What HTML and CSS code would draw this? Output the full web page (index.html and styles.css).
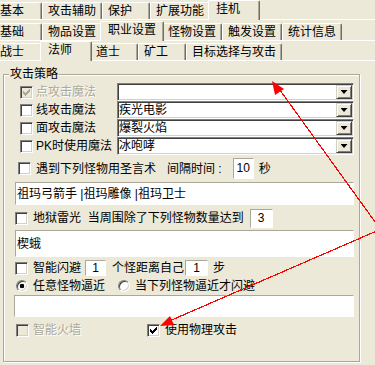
FILE: index.html
```html
<!DOCTYPE html>
<html lang="zh-CN">

<head>
    <meta charset="UTF-8">
    <meta name="viewport" content="width=device-width, initial-scale=1.0">
    <title>挂机 - 职业设置</title>
    <link rel="stylesheet" href="styles.css">
</head>

<body>
    <!-- 三层选项卡 -->
    <div class="tabrow first">
        <span class="tab start">基本</span>
        <span class="tab">攻击辅助</span>
        <span class="tab">保护</span>
        <span class="tab">扩展功能</span>
        <span class="tab on">挂机</span>
    </div>
    <div class="tabrow second">
        <span class="tab start">基础</span>
        <span class="tab">物品设置</span>
        <span class="tab on">职业设置</span>
        <span class="tab">怪物设置</span>
        <span class="tab">触发设置</span>
        <span class="tab">统计信息</span>
    </div>
    <div class="tabrow">
        <span class="tab start">战士</span>
        <span class="tab on">法师</span>
        <span class="tab">道士</span>
        <span class="tab">矿工</span>
        <span class="tab">目标选择与攻击</span>
    </div>

    <fieldset class="group">
        <legend>攻击策略</legend>

        <div class="row magic top">
            <span class="chk dis"><svg width="7" height="7"><path d="M0 2H1V3H2V4H3V3H4V2H5V1H6V0H7V3H6V4H5V5H4V6H3V7H2V6H1V5H0Z"/></svg></span>
            <span class="lbl gray">点攻击魔法</span>
            <div class="combo"><span class="val"></span><span class="drop"></span></div>
        </div>
        <div class="row magic">
            <span class="chk"></span>
            <span class="lbl">线攻击魔法</span>
            <div class="combo"><span class="val">疾光电影</span><span class="drop"></span></div>
        </div>
        <div class="row magic">
            <span class="chk"></span>
            <span class="lbl">面攻击魔法</span>
            <div class="combo"><span class="val">爆裂火焰</span><span class="drop"></span></div>
        </div>
        <div class="row magic">
            <span class="chk"></span>
            <span class="lbl">PK时使用魔法</span>
            <div class="combo"><span class="val">冰咆哮</span><span class="drop"></span></div>
        </div>

        <div class="row pray">
            <span class="chk"></span>
            <span class="txt">遇到下列怪物用圣言术</span>
            <span class="txt interval">间隔时间 :</span>
            <span class="edit sec">10</span>
            <span class="txt unit">秒</span>
        </div>
        <div class="field list">祖玛弓箭手 |祖玛雕像 |祖玛卫士</div>

        <div class="row thunder">
            <span class="chk"></span>
            <span class="txt">地狱雷光&nbsp;&nbsp;当周围除了下列怪物数量达到</span>
            <span class="edit num">3</span>
        </div>
        <div class="field tall">楔蛾</div>

        <div class="row dodge">
            <span class="chk"></span>
            <span class="txt">智能闪避</span>
            <span class="edit small first">1</span>
            <span class="txt near">个怪距离自己</span>
            <span class="edit small second">1</span>
            <span class="txt unit">步</span>
        </div>
        <div class="row radios">
            <span class="radio on"></span>
            <span class="txt">任意怪物逼近</span>
            <span class="radio second"></span>
            <span class="txt">当下列怪物逼近才闪避</span>
        </div>
        <div class="field low"></div>

        <div class="row last">
            <span class="chk dis blank"></span>
            <span class="txt gray">智能火墙</span>
            <span class="chk phys"><svg width="7" height="7"><path d="M0 2H1V3H2V4H3V3H4V2H5V1H6V0H7V3H6V4H5V5H4V6H3V7H2V6H1V5H0Z"/></svg></span>
            <span class="txt">使用物理攻击</span>
        </div>
    </fieldset>

    <!-- 红色标注箭头 -->
    <svg class="marks" width="375" height="365" viewBox="0 0 375 365">
        <line x1="375.5" y1="222.5" x2="279.5" y2="89.5" stroke="#f00" stroke-width="1.2" shape-rendering="crispEdges" />
        <polygon points="272,81 275,95 284,89" fill="#f00" />
        <line x1="375.5" y1="231.5" x2="170.5" y2="320.5" stroke="#f00" stroke-width="1.2" shape-rendering="crispEdges" />
        <polygon points="160,326 170,316 174,325" fill="#f00" />
    </svg>
</body>

</html>
```

FILE: styles.css
```css
* {
    margin: 0px;
    padding: 0px;
}

html,
body {
    width: 375px;
    height: 365px;
    overflow: hidden;
}

body {
    position: relative;
    background: #ece9d8;
    font: 12px/16px "Liberation Sans", "Noto Sans CJK SC", sans-serif;
    color: #000;
}

/* 选项卡 */
.tabrow {
    display: flex;
    height: 20px;
    white-space: nowrap;
    /* 页面上沿的白线 */
    background: linear-gradient(#fff, #fff) left bottom / 100% 1px no-repeat;
}

.tabrow.first {
    margin-bottom: 1px;
}

.tab {
    box-sizing: border-box;
    min-width: 48px;
    height: 17px;
    margin-top: 2px;
    padding: 0 5px;
    border: 1px solid #fff;
    border-bottom: 0;
    border-right-color: #716f64;
    border-radius: 2px 2px 0 0;
    box-shadow: inset -1px 0 #aca899;
    line-height: 16px;
}

.tab.start {
    margin-left: -6px;
}

.tab.on {
    position: relative;
    z-index: 1;
    min-width: 52px;
    height: 20px;
    margin: 0 -2px;
    padding: 0 7px;
    background: #ece9d8;
}

/* 分组框 */
.group {
    box-sizing: border-box;
    width: 357px;
    min-width: 0;
    height: 295px;
    margin: 6px 0 0 3px;
    padding: 0;
    border: 1px solid #aca899;
    box-shadow: 1px 1px 0 #fff, inset 1px 1px 0 #fff;
}

.group legend {
    margin-left: 5px;
    padding: 0 1px;
    line-height: 14px;
    background: #ece9d8;
}

.row {
    display: flex;
    align-items: center;
    white-space: nowrap;
}

.gray {
    color: #aca899;
    text-shadow: 1px 1px 0 #fff;
}

/* 复选框 */
.chk {
    box-sizing: border-box;
    flex: none;
    display: flex;
    align-items: center;
    justify-content: center;
    width: 13px;
    height: 13px;
    border: 1px solid;
    border-color: #808080 #fff #fff #808080;
    box-shadow: inset 1px 1px #404040, inset -1px -1px #d4d0c8;
    background: #fff;
}

.chk svg {
    display: block;
    shape-rendering: crispEdges;
}

.chk.dis {
    background: #ece9d8;
}

.chk.dis svg {
    fill: #aca899;
}

.radio {
    box-sizing: border-box;
    flex: none;
    width: 12px;
    height: 12px;
    border-radius: 50%;
    border: 1px solid;
    border-color: #808080 #fff #fff #808080;
    box-shadow: inset 1px 1px #404040, inset -1px -1px #d4d0c8;
    background: #fff;
}

.radio.on {
    background: radial-gradient(circle, #000 2px, #fff 2.6px);
}

/* 下拉框 */
.combo {
    box-sizing: border-box;
    display: flex;
    width: 237px;
    height: 18px;
    padding: 1px;
    border: 1px solid;
    border-color: #808080 #fff #fff #808080;
    box-shadow: inset 1px 1px #404040, inset -1px -1px #d4d0c8;
    background: #fff;
}

.combo .val {
    flex: 1;
    line-height: 14px;
}

.drop {
    box-sizing: border-box;
    display: flex;
    align-items: center;
    justify-content: center;
    width: 16px;
    height: 14px;
    border: 1px solid;
    border-color: #d4d0c8 #404040 #404040 #d4d0c8;
    box-shadow: inset 1px 1px #fff, inset -1px -1px #808080;
    background: #ece9d8;
}

.drop::after {
    content: "";
    width: 7px;
    height: 4px;
    background: #000;
    clip-path: polygon(0 0, 100% 0, 50% 100%);
}

/* 文本框 */
.edit,
.field {
    box-sizing: border-box;
    border: 1px solid;
    border-color: #aca899 #fff #fff #aca899;
    background: #fff;
}

.edit {
    flex: none;
    text-align: center;
}

.field {
    display: flex;
    align-items: center;
    margin-left: 11px;
    width: 339px;
    padding-left: 1px;
    white-space: nowrap;
}

/* 各行 */
.magic {
    height: 18px;
    padding-left: 16px;
}

.magic.top {
    margin-top: 2px;
}

.magic .lbl {
    width: 81px;
    margin-left: 3px;
}

.pray {
    height: 27px;
    padding-left: 14px;
}

.pray .txt:nth-child(2) {
    margin-left: 5px;
}

.interval {
    margin-left: 11px;
}

.edit.sec {
    width: 21px;
    height: 21px;
    line-height: 19px;
    margin-left: 11px;
}

.unit {
    margin-left: 5px;
}

.list {
    height: 23px;
}

.thunder {
    height: 24px;
    margin-top: 1px;
    padding-left: 11px;
}

.thunder .txt,
.dodge .txt:nth-child(2),
.radios .txt,
.last .txt {
    margin-left: 5px;
}

.edit.num {
    width: 23px;
    height: 19px;
    line-height: 17px;
    margin-left: 6px;
}

.tall {
    height: 27px;
}

.dodge {
    height: 22px;
    padding-left: 11px;
}

.edit.small {
    height: 16px;
    line-height: 14px;
}

.edit.small.first {
    width: 21px;
    margin-left: 4px;
}

.near {
    margin-left: 6px;
}

.edit.small.second {
    width: 23px;
    margin-left: 1px;
}

.dodge .unit {
    margin-left: 5px;
}

.radios {
    height: 14px;
    padding-left: 12px;
}

.radio.second {
    margin-left: 13px;
}

.low {
    height: 22px;
    margin-top: 2px;
    margin-left: 10px;
    width: 340px;
}

.last {
    height: 24px;
    margin-top: 1px;
    padding-left: 12px;
}

.last .txt:nth-child(2) {
    margin-left: 4px;
}

.chk.phys {
    margin-left: 66px;
}

/* 标注 */
.marks {
    position: absolute;
    left: 0px;
    top: 0px;
    pointer-events: none;
}
```
